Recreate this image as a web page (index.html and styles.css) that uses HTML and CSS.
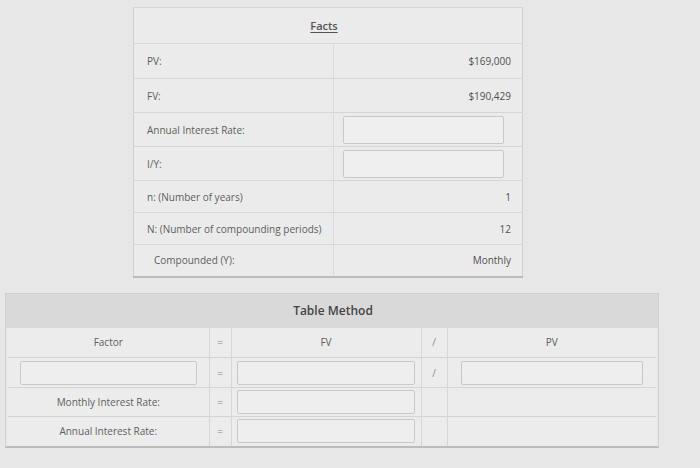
FILE: index.html
```html
<!DOCTYPE html>
<html>
<head>
<meta charset="utf-8">
<link rel="stylesheet" href="styles.css">
</head>
<body>
<div class="page">
  <table class="facts">
    <colgroup><col class="f1"><col class="f2"></colgroup>
    <tr class="hrow"><th colspan="2"><span class="title">Facts</span></th></tr>
    <tr class="r35"><td class="lbl">PV:</td><td class="val">$169,000</td></tr>
    <tr class="r34"><td class="lbl">FV:</td><td class="val">$190,429</td></tr>
    <tr class="r34"><td class="lbl">Annual Interest Rate:</td><td class="inp"><div class="box"></div></td></tr>
    <tr class="r34"><td class="lbl">I/Y:</td><td class="inp"><div class="box"></div></td></tr>
    <tr class="r32"><td class="lbl">n: (Number of years)</td><td class="val">1</td></tr>
    <tr class="r32"><td class="lbl">N: (Number of compounding periods)</td><td class="val">12</td></tr>
    <tr class="r32"><td class="lbl lbl2">Compounded (Y):</td><td class="val">Monthly</td></tr>
  </table>

  <div class="method">
    <div class="mhead">Table Method</div>
    <table class="mtable">
      <colgroup><col class="c1"><col class="c2"><col class="c3"><col class="c4"><col class="c5"></colgroup>
      <tr class="m30"><td class="ctr">Factor</td><td class="op">=</td><td class="ctr">FV</td><td class="op">/</td><td class="ctr">PV</td></tr>
      <tr class="m30"><td class="ctr"><div class="mbox b1"></div></td><td class="op">=</td><td class="ctr"><div class="mbox b3"></div></td><td class="op">/</td><td class="ctr"><div class="mbox b5"></div></td></tr>
      <tr class="m29"><td class="ctr">Monthly Interest Rate:</td><td class="op">=</td><td class="ctr"><div class="mbox b3"></div></td><td class="op"></td><td></td></tr>
      <tr class="m29"><td class="ctr">Annual Interest Rate:</td><td class="op">=</td><td class="ctr"><div class="mbox b3"></div></td><td class="op"></td><td></td></tr>
    </table>
  </div>
</div>
</body>
</html>
```

FILE: styles.css
```css
html, body {
  margin: 0;
  padding: 0;
  background: #e7e7e7;
}
body {
  font-family: "Open Sans", "Liberation Sans", sans-serif;
  color: #5e5e5e;
  font-size: 10px;
}
.page {
  width: 700px;
  height: 468px;
  padding-top: 7px;
  box-sizing: border-box;
}
.facts {
  margin-left: 133px;
  width: 389px;
  border-collapse: collapse;
  table-layout: fixed;
  background: #ebebeb;
  border: 1px solid #cfcfcf;
  border-bottom: 2px solid #bdbdbd;
}
.f1 { width: 200px; }
.f2 { width: 189px; }
.facts td, .facts th {
  border-top: 1px solid #d6d6d6;
  padding: 0;
}
.facts td.lbl {
  padding-left: 13px;
  border-right: 1px solid #d9d9d9;
  white-space: nowrap;
}
.facts td.lbl2 { padding-left: 20px; }
.facts td.val {
  text-align: right;
  padding-right: 11px;
  color: #505050;
}
.facts td.inp { padding-left: 9px; }
.hrow { height: 36px; }
.hrow th { font-weight: 600; font-size: 11px; color: #555; }
.title { text-decoration: underline; text-underline-offset: 2px; position: relative; left: -4px; }
.r35 { height: 35px; }
.r34 { height: 34px; }
.r32 { height: 32px; }
.box {
  width: 159px;
  height: 26px;
  background: #efefef;
  border: 1px solid #c9c9c9;
  border-radius: 2px;
}

.method {
  margin-top: 15px;
  margin-left: 5px;
  width: 652px;
  border: 1px solid #cfcfcf;
  border-bottom: 2px solid #bcbcbc;
  background: #e9e9e9;
}
.mhead {
  height: 34px;
  line-height: 34px;
  background: #d9d9d9;
  text-align: center;
  font-weight: 600;
  font-size: 12px;
  color: #444;
  padding-left: 2px;
}
.mtable {
  width: 648px;
  margin-left: 2px;
  border-collapse: collapse;
  table-layout: fixed;
}
.mtable td {
  padding: 0;
  border-top: 1px solid #d4d4d4;
  border-left: 1px solid #d6d6d6;
  background: #ececec;
}
.mtable td:first-child { border-left: none; }
.mtable tr:first-child td { border-top: none; }
.c1 { width: 201px; }
.c2 { width: 22px; }
.c3 { width: 190px; }
.c4 { width: 26px; }
.c5 { width: 209px; }
.m30 { height: 30px; }
.m29 { height: 29px; }
.ctr { text-align: center; }
.op { text-align: center; color: #8a8a8a; border-right: 1px solid #d6d6d6; }
.mbox {
  display: inline-block;
  vertical-align: middle;
  height: 22px;
  background: #eeeeee;
  border: 1px solid #c9c9c9;
  border-radius: 2px;
}
.b1 { width: 175px; }
.b3 { width: 176px; }
.b5 { width: 180px; }
```
